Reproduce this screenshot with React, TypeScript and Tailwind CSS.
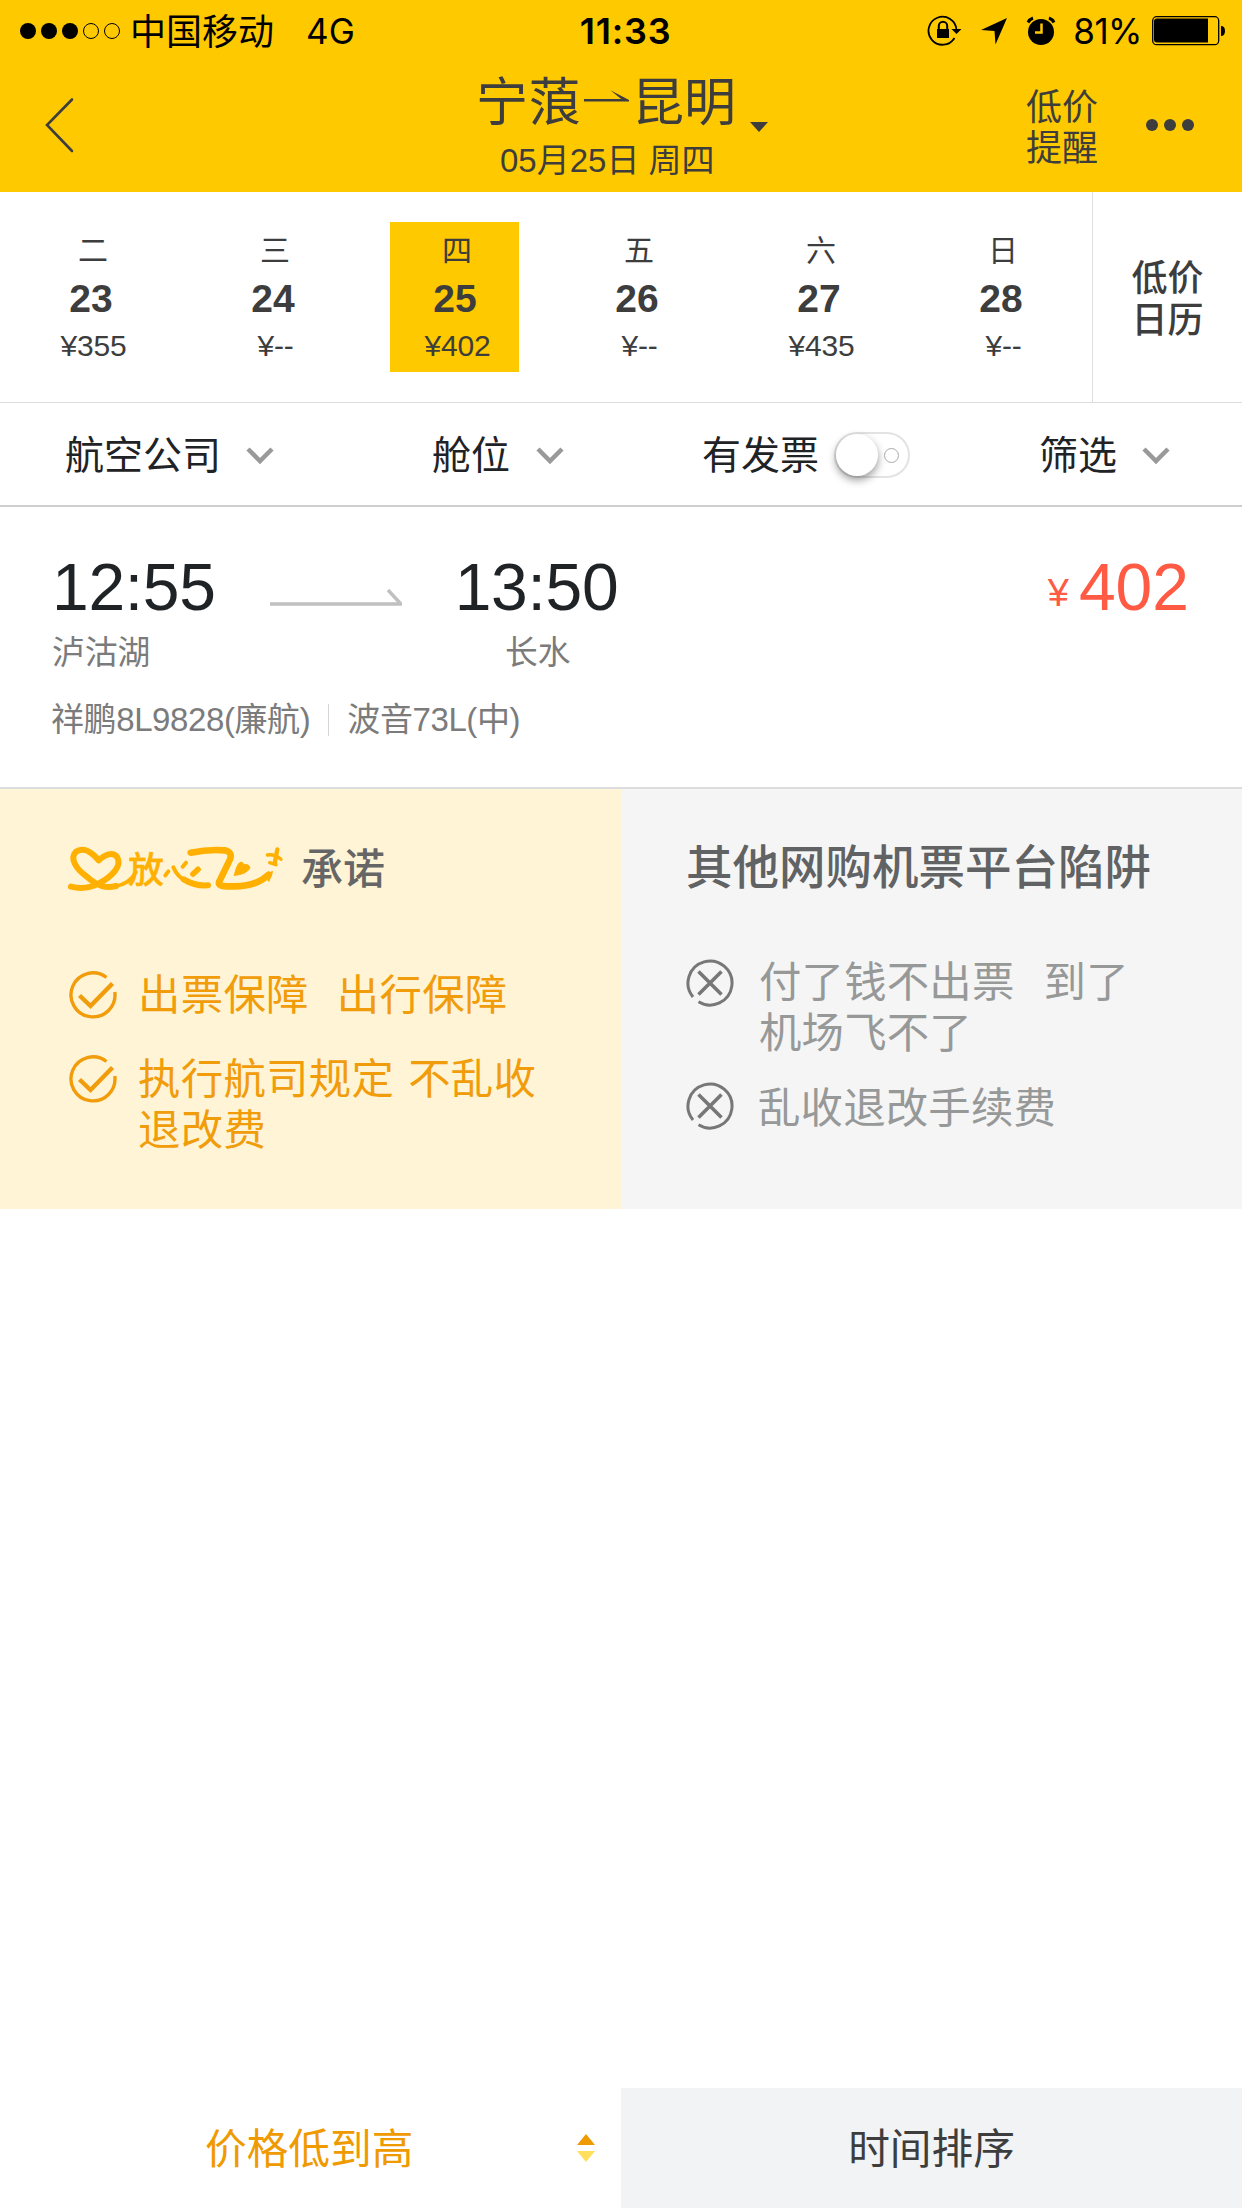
import React from 'react';

type Day = { week: string; day: string; price: string };

const days: Day[] = [
    { week: '二', day: '23', price: '¥355' },
    { week: '三', day: '24', price: '¥--' },
    { week: '四', day: '25', price: '¥402' },
    { week: '五', day: '26', price: '¥--' },
    { week: '六', day: '27', price: '¥435' },
    { week: '日', day: '28', price: '¥--' },
];

const ChevronDown: React.FC<{ className?: string }> = ({ className }) => (
    <svg viewBox="0 0 28 18" className={`mt-[3px] h-[18px] w-7 ${className ?? ''}`} fill="none" stroke="#999" strokeWidth="4.5">
        <path d="M2 2l12 12L26 2" />
    </svg>
);

const CheckIcon: React.FC = () => (
    <svg viewBox="0 0 48 48" className="mt-px h-12 w-12 shrink-0" fill="none" stroke="#f19c0b" strokeWidth="3.4">
        <path d="M37.5 6.5A22 22 0 1 0 45.8 21" />
        <path d="M10.500 24.500L21.500 35L43.500 12.500" strokeWidth="4.4" />
    </svg>
);

const CrossIcon: React.FC = () => (
    <svg viewBox="0 0 48 48" className="mt-0.5 h-12 w-12 shrink-0" fill="none" stroke="#777" strokeWidth="3">
        <path d="M7 38A22 22 0 1 1 12.500 42.800" />
        <path d="M12.500 12.500l23 23M35.500 12.500l-23 23" strokeWidth="3.600" />
    </svg>
);

const StatusBar: React.FC = () => (
    <div className="grid h-[60px] grid-cols-3 items-center font-['Inter','Noto_Sans_CJK_SC',sans-serif] text-[36px] leading-[60px] text-black">
        <div className="flex items-center pl-5">
            <div className="flex gap-[5px]">
                <span className="h-4 w-4 rounded-full bg-black" />
                <span className="h-4 w-4 rounded-full bg-black" />
                <span className="h-4 w-4 rounded-full bg-black" />
                <span className="h-4 w-4 rounded-full border border-black" />
                <span className="h-4 w-4 rounded-full border border-black" />
            </div>
            <span className="ml-[10px] pt-0.5">中国移动</span>
            <span className="ml-[32px] text-[35px]">4G</span>
        </div>
        <div className="pl-[9px] text-center text-[36px] font-semibold tracking-[0.8px]">11:33</div>
        <div className="flex items-center justify-end pr-4">
            <svg viewBox="0 0 36 32" className="h-8 w-9" fill="none" stroke="#000" strokeWidth="1.8">
                <path d="M27.500 23A14 14 0 1 1 29.500 15" />
                <path d="M24.500 14h10l-5 5z" fill="#000" stroke="none" />
                <path d="M10 14h12v9H10z" fill="#000" stroke="none" />
                <path d="M11.800 14v-3a4.200 4.200 0 0 1 8.400 0v3" strokeWidth="2" />
            </svg>
            <svg viewBox="0 0 28 28" className="ml-[17px] h-7 w-7">
                <path d="M27 1L15.500 27.500L14.500 14L1 13z" />
            </svg>
            <svg viewBox="0 0 30 30" className="ml-[18px] h-[30px] w-[30px]">
                <circle cx="15" cy="16" r="13" />
                <path d="M2 6.500A9 9 0 0 1 7 2M23 2a9 9 0 0 1 5 4.500" fill="none" stroke="#000" strokeWidth="3" />
                <path d="M15.500 7.500v9H9" fill="none" stroke="#ffc900" strokeWidth="2.500" />
            </svg>
            <span className="ml-[17px] text-[35px] tracking-[-0.5px]">81%</span>
            <svg viewBox="0 0 74 30" className="ml-[10px] h-[30px] w-[74px]">
                <rect x="0.700" y="0.700" width="66" height="28" rx="4" fill="none" stroke="#000" strokeWidth="1.300" />
                <path d="M5 2.500h51v24H5a3 3 0 0 1-3-3v-18a3 3 0 0 1 3-3z" />
                <path d="M69 10q4 0 4 5t-4 5z" />
            </svg>
        </div>
    </div>
);

const NavBar: React.FC = () => (
    <div className="flex h-[132px] items-start text-[#3d3d3d]">
        <svg viewBox="0 0 30 56" className="ml-11 mt-[37px] h-14 w-[30px]" fill="none" stroke="#3d3d3d" strokeWidth="2.600" strokeLinecap="round">
            <path d="M28 2.500L3 28L28 54" />
        </svg>
        <div className="ml-[402px] w-[292px]">
            <div className="flex h-[84px] items-center pt-0.5 text-[52px] leading-[84px]">
                <span className="tracking-[0.500px]">宁蒗</span>
                <svg viewBox="0 0 52 24" className="-mt-2 h-6 w-[51px]" fill="#3d3d3d">
                    <path d="M3 12h38L30 3L49 13v1.500H3z" />
                </svg>
                <span>昆明</span>
                <svg viewBox="0 0 18 10" className="ml-[14px] mt-[48px] h-[10px] w-[18px]" fill="#3d3d3d">
                    <path d="M0 0h18L9 10z" />
                </svg>
            </div>
            <div className="-mt-px pl-6 text-[33px] leading-[36px]">05月25日 周四</div>
        </div>
        <div className="ml-[258px] mt-[27px] w-[74px] text-[36px] leading-[41px]">
            低价
            <br />
            提醒
        </div>
        <div className="ml-[46px] mt-[59px] flex gap-1.5">
            <span className="h-3 w-3 rounded-full bg-[#3d3d3d]" />
            <span className="h-3 w-3 rounded-full bg-[#3d3d3d]" />
            <span className="h-3 w-3 rounded-full bg-[#3d3d3d]" />
        </div>
    </div>
);

const DateStrip: React.FC<{ selected: string }> = ({ selected }) => (
    <div className="flex h-[211px] border-b border-[#dedede] text-[#3d3d3d]">
        {days.map((d) => (
            <div key={d.day} className="w-[182px] pl-[26px] pt-[30px]">
                <div className={`h-[150px] w-[129px] text-center ${d.day === selected ? 'bg-[#ffc900]' : ''}`}>
                    <div className="pl-[5px] pt-[6px] text-[30px] leading-[46px]">{d.week}</div>
                    <div className="pl-px text-[39px] font-bold leading-[50px]">{d.day}</div>
                    <div className="pl-[6px] text-[30px] leading-[44px] tracking-[-0.2px]">{d.price}</div>
                </div>
            </div>
        ))}
        <div className="flex flex-1 flex-col justify-center border-l border-[#dedede] pt-[5px] text-center text-[36px] font-medium leading-[42px]">
            <span>低价</span>
            <span>日历</span>
        </div>
    </div>
);

const FilterBar: React.FC = () => (
    <div className="flex h-[104px] items-center border-b-2 border-[#cecece] text-[39px] leading-[60px] text-[#1f2326]">
        <span className="ml-[65px] pt-[3px]">航空公司</span>
        <ChevronDown className="ml-[25px]" />
        <span className="ml-[158px] pt-[3px]">舱位</span>
        <ChevronDown className="ml-[26px]" />
        <span className="ml-[138px] pt-[3px]">有发票</span>
        <div className="ml-[15px] mt-0.5 flex h-[46px] w-[76px] items-center rounded-full border-2 border-[#e3e3e3]">
            <span className="h-[42px] w-[42px] rounded-full bg-white shadow-[0_4px_8px_rgba(0,0,0,0.4)]" />
            <span className="ml-[6px] h-[15px] w-[15px] rounded-full border-[1.5px] border-[#aaa]" />
        </div>
        <span className="ml-[129px] pt-[3px]">筛选</span>
        <ChevronDown className="ml-[25px]" />
    </div>
);

const FlightCard: React.FC = () => (
    <div className="h-[282px] border-b-2 border-[#dcdddf] pl-[52px] pr-[53px] pt-[42px] text-[#7b7b7b]">
        <div className="flex h-[76px] items-center text-[66px] leading-[74px] text-[#1f2326]">
            <span className="tracking-[-0.3px]">12:55</span>
            <svg viewBox="0 0 134 18" className="ml-[53px] mt-[21px] h-[18px] w-[134px]" fill="none" stroke="#c0c0c0" strokeWidth="3.500">
                <path d="M1 15h132M119 1l12 13" />
            </svg>
            <span className="ml-[52px] tracking-[-0.3px]">13:50</span>
            <span className="ml-auto mr-[10px] mt-[11px] text-[38px] text-[#ff5a43]">¥</span>
            <span className="text-[#ff5a43]">402</span>
        </div>
        <div className="flex pt-px text-[32.800px] leading-[54px]">
            <span className="w-[453px]">泸沽湖</span>
            <span>长水</span>
        </div>
        <div className="flex items-center pt-[13px] text-[33px] leading-[54px] tracking-[-0.4px]">
            <span className="-ml-px">祥鹏8L9828(廉航)</span>
            <span className="ml-[18px] h-8 w-px bg-[#d5d5d5]" />
            <span className="ml-[18px]">波音73L(中)</span>
        </div>
    </div>
);

const BrandLogo: React.FC = () => (
    <svg viewBox="84 78 642 135" className="ml-0.5 h-[45px] w-[214px] overflow-visible" fill="none" stroke="#ffb000" strokeLinecap="round">
        <path d="M87 200Q130 211 170 191C212 168 240 138 226 112C212 92 188 106 170 121C148 94 122 80 101 96C82 116 104 148 132 168C168 200 192 206 222 198" strokeWidth="18" strokeLinejoin="round" />
        <path d="M222 198Q262 192 282 156" strokeWidth="11" />
        <text x="258" y="190" fontSize="108" fill="#ffb000" stroke="#ffb000" strokeWidth="1" fontWeight="500" fontFamily="Noto Sans CJK SC, sans-serif">放</text>
        <path d="M370 166L379 154M422 140L432 128" strokeWidth="12" />
        <path d="M453 162L468 148" strokeWidth="17" />
        <path d="M394 142Q406 172 438 187" strokeWidth="12" />
        <path d="M425 178Q460 199 498 196" strokeWidth="18" />
        <path d="M446 98Q500 87 548 91Q572 96 564 118L532 184Q525 201 566 199Q640 202 680 164" strokeWidth="20" strokeLinejoin="round" />
        <path d="M577 166Q584 134 594 127Q602 124 606 134Q622 132 624 144Q612 164 577 166z" fill="#ffb000" strokeWidth="3" />
        <path d="M680 182L690 156" strokeWidth="6" />
        <path d="M706 88L698 131" strokeWidth="13" />
        <path d="M676 105Q697 101 717 118M683 128L702 134" strokeWidth="10" />
    </svg>
);

const Promise: React.FC = () => (
    <div className="flex h-[420px]">
        <div className="w-1/2 bg-[#fff5d6] pl-[68px] pt-[48px] text-[42.400px] leading-[51px] text-[#f19c0b]">
            <div className="flex h-[62px] items-center">
                <BrandLogo />
                <span className="ml-[17px] pt-[3px] text-[42px] font-medium text-[#666]">承诺</span>
            </div>
            <div className="mt-[71px] flex gap-[21px] pl-px tracking-[0.3px]">
                <CheckIcon />
                <div className="flex gap-[28px]">
                    <span>出票保障</span>
                    <span>出行保障</span>
                </div>
            </div>
            <div className="mt-[33px] flex gap-[21px] pl-px tracking-[0.3px]">
                <CheckIcon />
                <div>
                    <div className="flex gap-[14px]">
                        <span>执行航司规定</span>
                        <span>不乱收</span>
                    </div>
                    <div>退改费</div>
                </div>
            </div>
        </div>
        <div className="w-1/2 bg-[#f5f5f5] pl-[65px] pt-[48px] text-[42.400px] leading-[51px] text-[#979999]">
            <div className="h-[62px] text-[46.500px] font-medium leading-[63px] text-[#606263]">其他网购机票平台陷阱</div>
            <div className="mt-[58px] flex gap-[25px] tracking-[0.2px]">
                <CrossIcon />
                <div>
                    <div className="flex gap-[29px]">
                        <span>付了钱不出票</span>
                        <span>到了</span>
                    </div>
                    <div>机场飞不了</div>
                </div>
            </div>
            <div className="mt-[21px] flex gap-[24px] tracking-[0.2px]">
                <CrossIcon />
                <span className="pt-[3px]">乱收退改手续费</span>
            </div>
        </div>
    </div>
);

const SortTabs: React.FC = () => (
    <div className="mt-auto flex h-[120px] text-[41.700px] leading-[124px]">
        <div className="flex w-1/2 bg-white pl-[205px] text-[#ef9a00]">
            <span>价格低到高</span>
            <svg viewBox="0 0 18 28" className="ml-auto mr-[26px] mt-[46px] h-7 w-[18px]">
                <path d="M0 11L9 0L18 11z" fill="#ef9a00" />
                <path d="M0 17h18L9 28z" fill="#ffdf5c" />
            </svg>
        </div>
        <div className="w-1/2 bg-[#f1f3f5] text-center text-[#3d3d3d]">时间排序</div>
    </div>
);

const App: React.FC = () => {
    return (
        <main className="flex h-[2208px] w-[1242px] flex-col overflow-hidden whitespace-nowrap bg-white font-['Liberation_Sans','Noto_Sans_CJK_SC',sans-serif]">
            <header className="bg-[#ffc900]">
                <StatusBar />
                <NavBar />
            </header>
            <DateStrip selected="25" />
            <FilterBar />
            <FlightCard />
            <Promise />
            <SortTabs />
        </main>
    );
};

export default App;
